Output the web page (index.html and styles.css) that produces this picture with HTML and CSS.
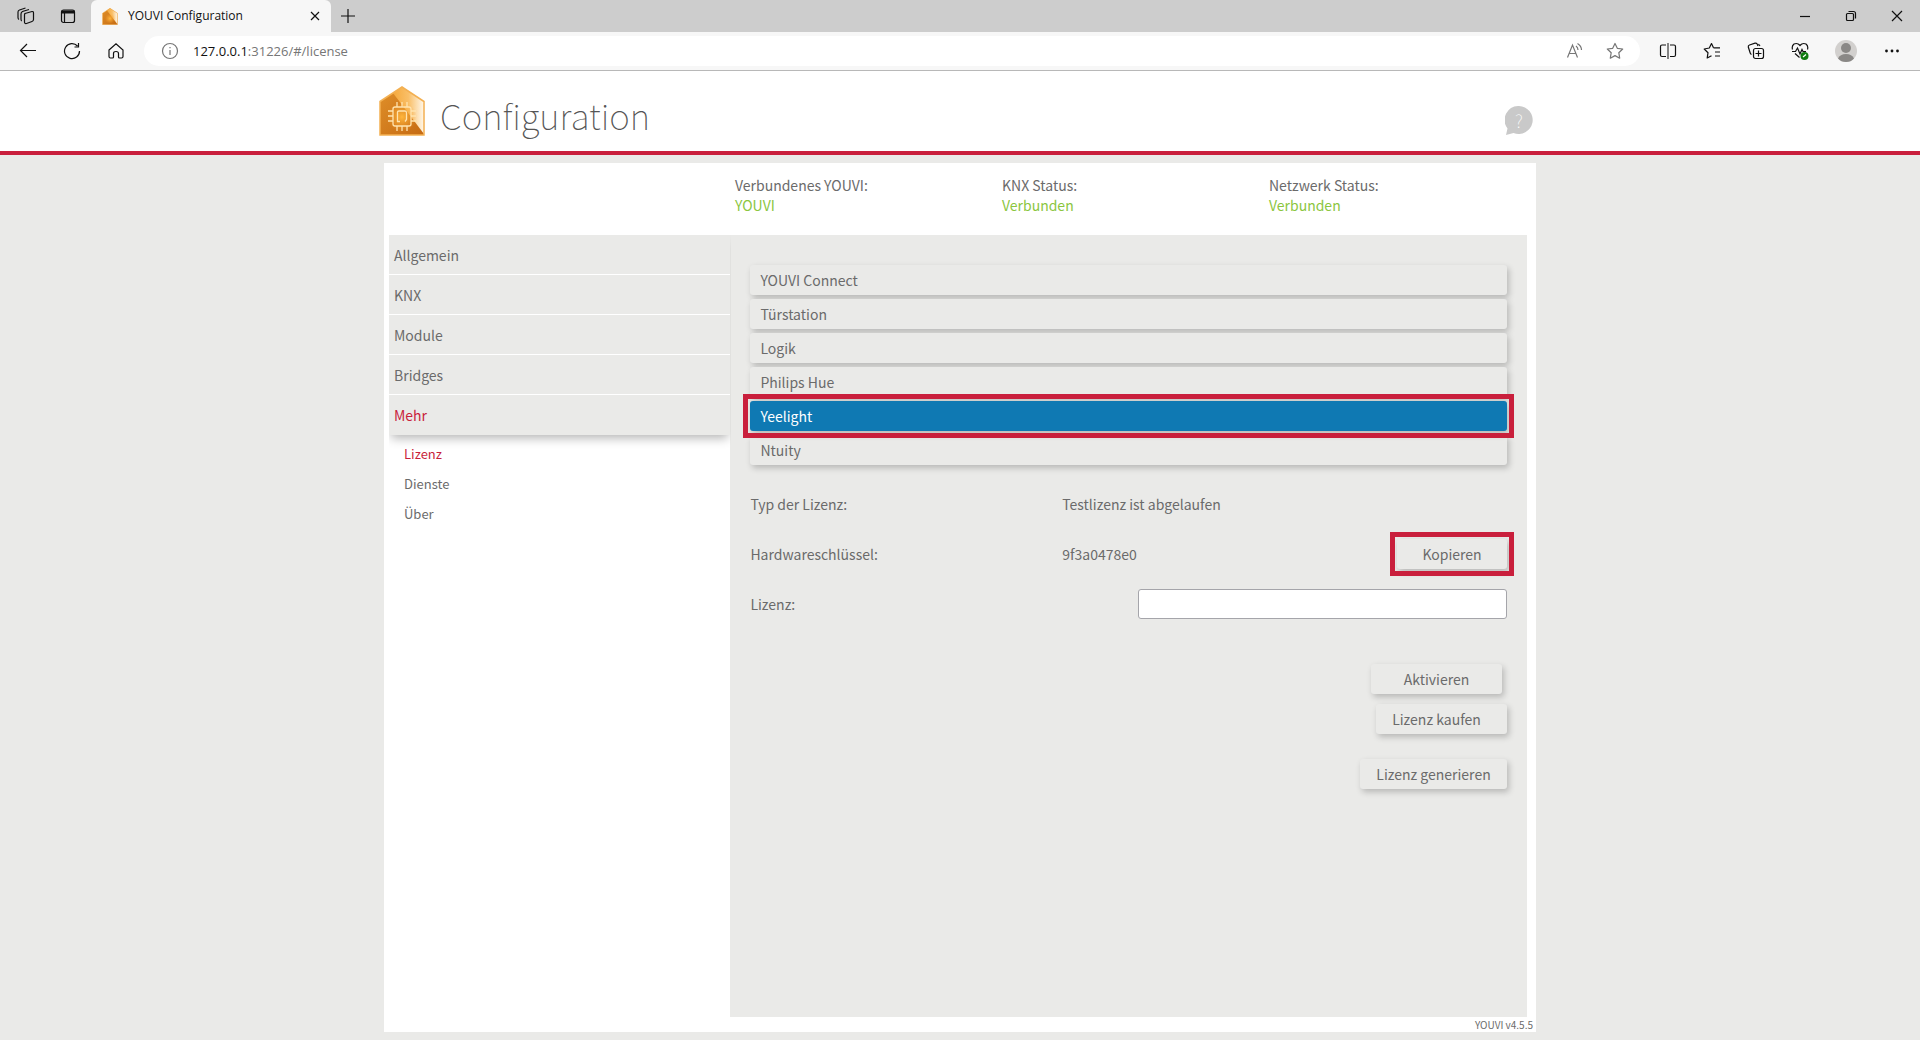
FILE: index.html
```html
<!DOCTYPE html>
<html lang="de">
<head>
<meta charset="utf-8">
<meta name="viewport" content="width=device-width, initial-scale=1">
<title>YOUVI Configuration</title>
<link rel="stylesheet" href="styles.css">
</head>
<body>
<svg class="defs" width="0" height="0" aria-hidden="true">
  <defs>
    <linearGradient id="face" x1="0" y1="0" x2="1" y2="1"><stop offset="0" stop-color="#e0902a"/><stop offset="1" stop-color="#c56a12"/></linearGradient>
    <linearGradient id="shine" x1="0" y1="0" x2="1" y2="0"><stop offset="0" stop-color="#f5a93c"/><stop offset=".5" stop-color="#f9bf68"/><stop offset="1" stop-color="#fff8ec"/></linearGradient>
    <radialGradient id="glow"><stop offset="0" stop-color="#ffb63c"/><stop offset="1" stop-color="#f5a030" stop-opacity="0"/></radialGradient>
    <symbol id="house" viewBox="0 0 46 50">
      <path d="M1 15.500 23 1 45 15.500V49H1z" fill="url(#face)"/>
      <path d="M14 7 23 1 45 15.500V48z" fill="url(#shine)"/>
      <circle cx="23" cy="31" r="15" fill="url(#glow)"/>
      <path d="M1 15.500 23 1 45 15.500V49H1z" fill="none" stroke="#f3b052" stroke-width="1.500"/>
    </symbol>
  </defs>
</svg>

<div class="browser">
  <div class="tabstrip">
    <button class="strip-btn" aria-label="Arbeitsbereiche"><svg width="18" height="18" viewBox="0 0 18 18"><path d="M8 6.500 15 4.500Q16.500 4.300 16.500 6V12.500Q16.500 14 15 14.500L9.500 16.500Q7.500 17 7.500 15V8Q7.500 7 8 6.500zM4.700 14Q4 13.500 4 12V7Q4 5.300 5.500 4.500L12 2.500M2 12.500Q1 12 1 10.500V5Q1 3.500 2.500 3L8.500 1"/></svg></button>
    <button class="strip-btn" aria-label="Registerkarten"><svg width="16" height="16" viewBox="0 0 16 16"><rect x="1.500" y="2" width="13" height="12.500" rx="2"/><path d="M1.500 4H14.500" stroke-width="3"/><path d="M4.500 5V14"/></svg></button>
    <div class="tab">
      <svg class="tab-logo" width="16" height="17"><use href="#house"/></svg>
      <span>YOUVI Configuration</span>
      <button class="tab-close" aria-label="Tab schließen"><svg width="10" height="10" viewBox="0 0 10 10"><path d="M1 1 9 9M9 1 1 9"/></svg></button>
    </div>
    <button class="new-tab" aria-label="Neuer Tab"><svg width="14" height="14" viewBox="0 0 14 14"><path d="M7 0V14M0 7H14"/></svg></button>
    <div class="window-controls">
      <button aria-label="Minimieren"><svg width="12" height="12" viewBox="0 0 12 12"><path d="M1 6.500H11"/></svg></button>
      <button aria-label="Verkleinern"><svg width="12" height="12" viewBox="0 0 12 12"><rect x="1.500" y="3.500" width="7" height="7" rx="1"/><path d="M3.500 1.500H8.500Q10.500 1.500 10.500 3.500V8.500"/></svg></button>
      <button aria-label="Schließen"><svg width="12" height="12" viewBox="0 0 12 12"><path d="M1 1 11 11M11 1 1 11"/></svg></button>
    </div>
  </div>
  <div class="toolbar">
    <button class="tool" aria-label="Zurück"><svg width="18" height="18" viewBox="0 0 18 18"><path d="M8 2 1.500 8.500 8 15M1.500 8.500H17"/></svg></button>
    <button class="tool" aria-label="Neu laden"><svg width="18" height="18" viewBox="0 0 18 18"><path d="M14.500 4A7.500 7.500 0 1 0 16.500 9M15.500 1V5H11.500"/></svg></button>
    <button class="tool" aria-label="Startseite"><svg width="18" height="18" viewBox="0 0 18 18"><path d="M2 8 9 1.800 16 8V14.500Q16 16 14.500 16H12.500Q11.500 16 11.500 15V11.500Q11.500 9.500 9 9.500T6.500 11.500V15Q6.500 16 5.500 16H3.500Q2 16 2 14.500z"/></svg></button>
    <div class="address">
      <svg class="grey" width="18" height="18" viewBox="0 0 18 18"><circle cx="9" cy="9" r="7.500"/><path d="M9 8V13M9 5V6.300"/></svg>
      <span class="url"><b>127.0.0.1</b>:31226/#/license</span>
      <button class="pill-btn grey" aria-label="Laut vorlesen"><svg width="18" height="18" viewBox="0 0 18 18"><path d="M1.500 15.500 6.500 3 11.500 15.500M3.200 11.500H9.800M10 4Q12 5.500 12 8M11.500 1.500Q15.500 4 15.500 8"/></svg></button>
      <button class="pill-btn grey" aria-label="Favorit"><svg width="18" height="18" viewBox="0 0 18 18"><path d="M9 1.500 11.300 6.300 16.700 7 12.800 10.700 13.700 16.200 9 13.600 4.300 16.200 5.200 10.700 1.300 7 6.700 6.300z" stroke-linejoin="round"/></svg></button>
    </div>
    <button class="tool" aria-label="Geteilter Bildschirm"><svg width="18" height="18" viewBox="0 0 18 18"><path d="M7 3H3Q1.500 3 1.500 4.500V13Q1.500 14.500 3 14.500H7M11 3H15Q16.500 3 16.500 4.500V13Q16.500 14.500 15 14.500H11"/><path d="M9 1V17" stroke-width="1"/></svg></button>
    <button class="tool" aria-label="Favoriten"><svg width="18" height="18" viewBox="0 0 18 18"><path d="M10.500 5.800 8.500 1.500 6.300 6 1.200 7 5 10.700 4.200 16 8.500 13.700M10.500 5.800H17M12 10H17M12 14H17" stroke-linejoin="round"/></svg></button>
    <button class="tool" aria-label="Sammlungen"><svg width="18" height="18" viewBox="0 0 18 18"><rect x="6.500" y="6.500" width="10" height="10" rx="2"/><path d="M11.500 8.500V14.500M8.500 11.500H14.500M4.500 12.500Q3.500 12 3.200 11L1.300 5Q1 3.500 2.500 3L8 1.200Q9.500 1 10.200 2L11 4M13 4Q11.500 2 11.500 2"/></svg></button>
    <button class="tool" aria-label="Leistung"><svg width="18" height="18" viewBox="0 0 18 18"><path d="M1.500 7.500Q.500 4 3 2Q6.500 .500 9 3.500Q11.500 .500 15 2Q17.500 4 16.500 7.500M1 9.500H4.500L6.500 6 9 12 11 7.500 12 9.500H15M4 11.500 8.500 15.500"/><circle cx="13.500" cy="14" r="4" fill="#107c10" stroke="none"/><path d="M12 15 15 12.500" stroke="#fff"/></svg></button>
    <button class="tool tool-wide" aria-label="Profil"><svg width="22" height="22" viewBox="0 0 22 22" stroke="none"><circle cx="11" cy="11" r="11" fill="#d2d0ce"/><circle cx="11" cy="8" r="5" fill="#8a8886"/><path d="M3 18.500Q5 14 11 14T19 18.500Q16 22 11 22T3 18.500z" fill="#8a8886"/></svg></button>
    <button class="tool" aria-label="Mehr Optionen"><svg width="18" height="18" viewBox="0 0 18 18"><g fill="#111" stroke="none"><circle cx="3.500" cy="9" r="1.400"/><circle cx="9" cy="9" r="1.400"/><circle cx="14.500" cy="9" r="1.400"/></g></svg></button>
  </div>
</div>

<header class="header">
  <div class="header-inner">
    <svg class="logo" width="46" height="50" viewBox="0 0 46 50" aria-hidden="true">
      <use href="#house" width="46" height="50"/>
      <g fill="none" stroke="#ffe3ae" stroke-width="1.300">
        <rect x="14" y="21" width="18" height="19" rx="2"/>
        <path d="M18 16V21M23 16V21M28 16V21M18 40V45M23 40V45M28 40V45M9 25H14M9 30H14M9 35H14M32 25H37M32 30H37M32 35H37M21 35.500H18.500V26Q18.500 25 20 25H26Q27.500 25 27.500 27V33.500L26 35.500"/>
      </g>
    </svg>
    <h1>Configuration</h1>
    <button class="help" aria-label="Hilfe"><svg width="28" height="29" viewBox="0 0 28 29"><path d="M14 0a14 14 0 1 1-5.500 27L1 29 2.500 22.500A14 14 0 0 1 14 0z" fill="#c9c9c9"/></svg><span>?</span></button>
  </div>
</header>

<main class="card">
  <dl class="status">
    <div><dt>Verbundenes YOUVI:</dt><dd>YOUVI</dd></div>
    <div><dt>KNX Status:</dt><dd>Verbunden</dd></div>
    <div><dt>Netzwerk Status:</dt><dd>Verbunden</dd></div>
  </dl>
  <div class="columns">
    <nav class="sidebar">
      <ul class="menu">
        <li><a href="#/general">Allgemein</a></li>
        <li><a href="#/knx">KNX</a></li>
        <li><a href="#/modules">Module</a></li>
        <li><a href="#/bridges">Bridges</a></li>
        <li><a class="current" href="#/more">Mehr</a></li>
      </ul>
      <ul class="submenu">
        <li><a class="current" href="#/license">Lizenz</a></li>
        <li><a href="#/services">Dienste</a></li>
        <li><a href="#/about">Über</a></li>
      </ul>
    </nav>
    <section class="content">
      <div class="products">
        <button class="product">YOUVI Connect</button>
        <button class="product">Türstation</button>
        <button class="product">Logik</button>
        <button class="product">Philips Hue</button>
        <button class="product selected marked">Yeelight</button>
        <button class="product">Ntuity</button>
      </div>
      <form class="license">
        <div class="row"><span>Typ der Lizenz:</span><span>Testlizenz ist abgelaufen</span></div>
        <div class="row"><span>Hardwareschlüssel:</span><span>9f3a0478e0</span><button type="button" class="button copy marked">Kopieren</button></div>
        <div class="row"><label for="key">Lizenz:</label><input id="key" type="text"></div>
        <div class="actions">
          <button type="button" class="button activate">Aktivieren</button>
          <button type="button" class="button buy">Lizenz kaufen</button>
          <button type="button" class="button generate">Lizenz generieren</button>
        </div>
      </form>
    </section>
  </div>
  <footer class="version">YOUVI v4.5.5</footer>
</main>
</body>
</html>
```
FILE: styles.css
```css
* { box-sizing: border-box; }

body {
  margin: 0;
  min-height: 100vh;
  display: flex;
  flex-direction: column;
  background: #eaeae8;
  color: #6b6b6b;
  font: 14px/20px "Noto Sans CJK SC", "Noto Sans", sans-serif;
}

button {
  padding: 0;
  border: 0;
  background: none;
  color: inherit;
  font: inherit;
}

a { color: inherit; text-decoration: none; }
ul, dl, dd, h1 { margin: 0; padding: 0; list-style: none; }
.defs { position: absolute; }

/* Browser window */
.browser {
  font-family: "Open Sans", "Noto Sans", sans-serif;
  color: #111;
  background: #f7f7f7;
  border-bottom: 1px solid #b8b8b8;
}
.browser svg { flex: none; fill: none; stroke: #111; stroke-width: 1.2; }
.browser .tab-logo, .browser .tool-wide svg { stroke: none; }
.browser .grey, .browser .grey svg { stroke: #767676; }
.browser button { display: flex; align-items: center; justify-content: center; }

.tabstrip {
  display: flex;
  height: 32px;
  padding-left: 5px;
  background: #cdcdcd;
}
.strip-btn { width: 42px; }
.tab {
  display: flex;
  align-items: center;
  width: 240px;
  margin-left: 2px;
  padding: 0 10px 0 11px;
  gap: 10px;
  border-radius: 6px 6px 0 0;
  background: #f7f7f7;
  font-size: 12px;
}
.tab span { flex: 1; white-space: nowrap; }
.tab-close { width: 12px; }
.new-tab { width: 34px; }
.window-controls { display: flex; margin-left: auto; }
.window-controls button { width: 46px; }

.toolbar { display: flex; align-items: center; height: 38px; padding: 0 6px; }
.tool { width: 44px; height: 30px; }
.tool-wide { width: 48px; }
.address {
  flex: 1;
  display: flex;
  align-items: center;
  height: 30px;
  margin: 0 6px;
  padding: 0 5px 0 17px;
  border-radius: 15px;
  background: #fff;
}
.url { flex: 1; margin-left: 14px; font-size: 13px; color: #767676; }
.url b { font-weight: 400; color: #111; }
.pill-btn { width: 40px; height: 30px; }

/* Page header */
.header { background: #fff; border-bottom: 4px solid #c91f3c; }
.header-inner {
  display: flex;
  align-items: center;
  width: 60%;
  height: 80px;
  margin: 0 auto;
}
.logo { margin-left: -5px; }
h1 {
  flex: 1;
  margin-left: 15px;
  padding-top: 8px;
  color: #555;
  font-size: 35px;
  line-height: 40px;
  font-weight: 100;
}
.help {
  display: grid;
  place-items: center;
  margin: 18px 3px 0 0;
  color: #fff;
}
.help > * { grid-area: 1 / 1; }
.help span { font-size: 18px; font-weight: 100; }

/* Main card */
.card {
  flex: 1;
  display: flex;
  flex-direction: column;
  width: 60%;
  margin: 8px auto;
  padding: 0 9px 0 5px;
  background: #fff;
}
.status {
  display: grid;
  grid-template-columns: repeat(3, 1fr);
  height: 72px;
  padding: 12px 0 0 346px;
  margin-right: -9px;
}
.status dd { color: #8bc63f; }

.columns { flex: 1; display: grid; grid-template-columns: 3fr 7fr; }
.menu { box-shadow: 0 5px 10px -2px rgba(0, 0, 0, .3); clip-path: inset(0 0 -20px 0); }
.menu li { border-bottom: 1px solid #fff; background: #eaeae8; }
.menu li:last-child { border-color: #eaeae8; }
.menu a { display: block; padding: 10px 5px 9px; }
.submenu { padding: 4px 15px; font-size: 13px; }
.submenu a { display: block; padding: 5px 0; }
.current { color: #c91f3c; }

.content { padding: 30px 20px; background: #eaeae8; }
.products { display: flex; flex-direction: column; gap: 4px; }
.product, .button {
  height: 30px;
  border-radius: 3px;
  background: #eaeae8;
  box-shadow: 2px 3px 6px rgba(0, 0, 0, .22);
}
.product { padding: 0 10px; text-align: left; }
.product.selected { background: #0f79b3; color: #fff; }

/* Red frame that points out a control */
.marked { position: relative; z-index: 1; }
.marked::after {
  content: "";
  position: absolute;
  inset: -7px;
  border: 5px solid #c91f3c;
}

.license { padding-top: 14px; }
.row {
  display: grid;
  grid-template-columns: 312fr 335fr 110fr;
  align-items: center;
  height: 50px;
}
.row input {
  grid-column: 2 / -1;
  justify-self: end;
  width: 83%;
  height: 30px;
  border: 1px solid #a5a5aa;
  border-radius: 3px;
  padding: 0 8px;
  background: #fff;
  font: inherit;
}
.actions { display: flex; flex-direction: column; align-items: flex-end; gap: 10px; padding-top: 35px; }
.activate, .buy { width: 131px; }
.activate { margin-right: 5px; }
.buy { padding-right: 10px; }
.generate { width: 147px; margin-top: 15px; }

.version { margin-right: -6px; font-size: 10px; line-height: 15px; text-align: right; }
```
